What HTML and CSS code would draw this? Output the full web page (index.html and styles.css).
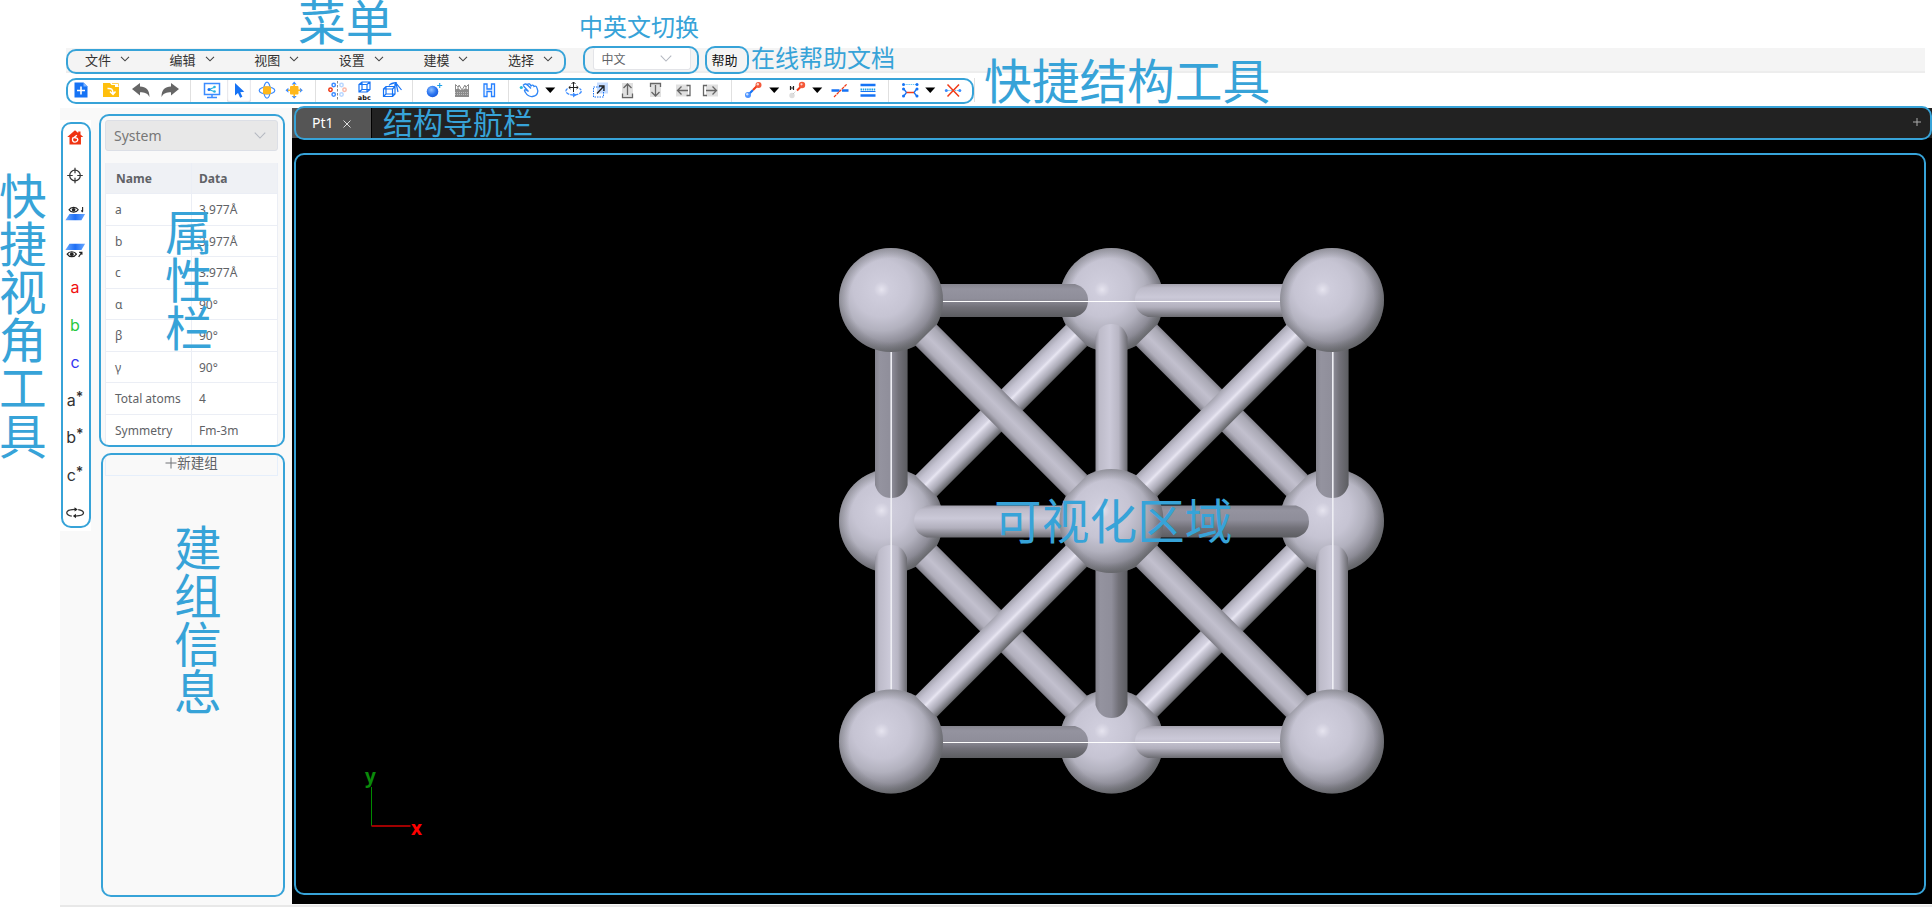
FILE: index.html
```html
<!DOCTYPE html>
<html lang="zh-CN">
<head>
<meta charset="utf-8">
<title>Pt1</title>
<link rel="stylesheet" href="styles.css">
</head>
<body>
<div class="app">
  <header class="menubar">
    <nav class="menus">
      <span class="menu">文件<svg class="chev" viewBox="0 0 10 6"><path d="M1 .8l4 4 4-4"/></svg></span>
      <span class="menu">编辑<svg class="chev" viewBox="0 0 10 6"><path d="M1 .8l4 4 4-4"/></svg></span>
      <span class="menu">视图<svg class="chev" viewBox="0 0 10 6"><path d="M1 .8l4 4 4-4"/></svg></span>
      <span class="menu">设置<svg class="chev" viewBox="0 0 10 6"><path d="M1 .8l4 4 4-4"/></svg></span>
      <span class="menu">建模<svg class="chev" viewBox="0 0 10 6"><path d="M1 .8l4 4 4-4"/></svg></span>
      <span class="menu">选择<svg class="chev" viewBox="0 0 10 6"><path d="M1 .8l4 4 4-4"/></svg></span>
    </nav>
    <div class="lang">中文<svg class="chev pale" viewBox="0 0 10 6"><path d="M.5.500l4.500 4.700L9.500.500"/></svg></div>
    <span class="help">帮助</span>
  </header>

  <div class="toolbar">
    <div class="group g1">
      <svg class="ic" viewBox="0 0 24 24"><path fill="#1673f5" d="M5.500 4.500h9l4 4v11h-13z"/><path fill="#7db4ff" d="M14.500 4.500v4h4z"/><path stroke="#fff" stroke-width="1.600" d="M12 8.500v8M8 12.500h8"/></svg>
      <svg class="ic" viewBox="0 0 24 24"><path fill="#ffbf0d" d="M4 5h7l1.500 2H16v2h4v10H4z"/><path fill="none" stroke="#ffd35a" d="M13 5.500h6.500v3"/><path fill="none" stroke="#fff" stroke-width="1.500" d="M8.500 10.500c4-.5 5.500 1 5.500 5M11 13.500l3 3 2.500-3"/></svg>
      <svg class="ic" viewBox="0 0 24 24"><path fill="#666" d="M3 11l8-6v3.600c6 0 9.500 3.500 9.500 10.400-2-4-5-4.800-9.500-4.800V17.500z"/></svg>
      <svg class="ic" viewBox="0 0 24 24"><path fill="#666" d="M20 11l-8-6v3.600C6 8.600 2.500 12 2.500 19c2-4 5-4.800 9.500-4.800v3.300z"/></svg>
    </div>
    <div class="group g2">
      <svg class="ic" viewBox="0 0 24 24"><path fill="none" stroke="#3c8cff" stroke-width="1.500" d="M4.500 5.500h15v11h-15zM12 16.500v3M7 19.500h10"/><path stroke="#26b3e0" fill="#26b3e0" stroke-width="1.200" d="M9 11.500l5-2M9 11.500l5 2"/><circle cx="9" cy="11.400" r="1.500" fill="#1673f5"/><circle cx="14.500" cy="9" r="1.300" fill="#26b3e0"/><circle cx="14.500" cy="13.500" r="1.300" fill="#26b3e0"/></svg>
      <svg class="ic picked" viewBox="0 0 24 24"><path fill="#1673f5" d="M8 5v12.500l3-2.600 2.100 4.800 2.300-1-2.100-4.500 4-.4z"/></svg>
      <svg class="ic" viewBox="0 0 24 24"><ellipse cx="12" cy="12.500" rx="7.800" ry="3.500" fill="none" stroke="#3c8cff" stroke-width="1.200"/><ellipse cx="12" cy="12.200" rx="3.300" ry="8" fill="none" stroke="#3c8cff" stroke-width="1.200"/><rect x="8" y="8.300" width="8" height="8" rx="1.500" fill="#ffb81c"/></svg>
      <svg class="ic" viewBox="0 0 24 24"><rect x="8" y="8" width="8.500" height="8.500" rx="1" fill="#ffb81c"/><path fill="#3c8cff" d="M12.200 3.500l2.500 2.900H9.700zM12.200 20.800l2.500-2.900H9.700zM3.500 12.200l2.900-2.500v5zM20.800 12.200l-2.900-2.500v5z"/><path stroke="#ffb81c" stroke-width="1.600" d="M12.200 6v12.500M6 12.200h12.500"/></svg>
    </div>
    <div class="group g3">
      <svg class="ic" viewBox="0 0 24 24"><path stroke="#888" stroke-dasharray="2.500 1.500" d="M12.500 3v19"/><g fill="none" stroke-width="1.500"><circle cx="8.700" cy="7" r="1.700" stroke="#3c8cff"/><circle cx="5.500" cy="11.800" r="1.700" stroke="#f03a17"/><circle cx="8.700" cy="16.500" r="1.700" stroke="#3c8cff"/><circle cx="16.500" cy="7" r="1.700" stroke="#b8d6ff"/><circle cx="19.500" cy="11.800" r="1.700" stroke="#f9b9aa"/><circle cx="16.500" cy="16.500" r="1.700" stroke="#b8d6ff"/></g></svg>
      <svg class="ic" viewBox="0 0 24 24"><path fill="none" stroke="#1673f5" stroke-width="1.200" d="M7 6.500h8v7.500H7zM7 6.500l3-2.500h8v7.500l-3 2.500M15 6.500l3-2.500M10 4v7.500h8M10 11.500L7 14"/><text x="12.300" y="21.500" class="abc">abc</text></svg>
      <svg class="ic" viewBox="0 0 24 24"><path fill="none" stroke="#1673f5" stroke-width="1.200" d="M3.500 11h9v7.500h-9zM3.500 11L6 8.500h9v7.500l-2.500 2.500M12.500 11L15 8.500M6 8.500V16h9M6 16l-2.500 2.500M9 7.500C11 5 13 4.500 16 4.500l-1.500 3M16 4.500l-6 2M16 5l5.500 7M16 5l2 9M16 5l-1.500 5"/></svg>
    </div>
    <div class="group g4">
      <svg class="ic" viewBox="0 0 24 24"><defs><radialGradient id="ball" cx=".4" cy=".35" r=".7"><stop offset="0" stop-color="#8fc0ff"/><stop offset=".6" stop-color="#2a74f0"/><stop offset="1" stop-color="#1858d8"/></radialGradient></defs><circle cx="10.500" cy="13.500" r="5.800" fill="url(#ball)"/><path stroke="#1ba0e8" stroke-width="1.100" d="M17.700 5v5M15.200 7.500h5"/></svg>
      <svg class="ic" viewBox="0 0 24 24"><path fill="none" stroke="#8b8b8b" d="M5.500 12V6.500l2 2h1.500V7l3 5 3-5v1.500h1.500l2-2V12M8 8v4M16 8v4M5 12.500h14"/><path fill="#8b8b8b" d="M5 11.500l3.500-1 3 2 3.500-2 4 1V19H5z"/><path stroke="#bbb" stroke-dasharray="1 1" d="M5 14.500h14M5 16.500h14"/></svg>
      <svg class="ic" viewBox="0 0 24 24"><path fill="#eef5ff" stroke="#2680ff" stroke-width="1.300" d="M7 6h3v5h4.500V6h3v12.500h-3v-5H10v5H7z"/></svg>
    </div>
    <div class="group g5">
      <svg class="ic" viewBox="0 0 24 24"><circle cx="4.300" cy="9.500" r="1.600" fill="#25b9d8"/><path fill="none" stroke="#2f86f6" stroke-width="1.300" d="M6 7.500c2-2.500 3.500-1.500 5 0l3 3M10 6.500c2-1.500 3-.5 4 1.500 1-1.500 2.500-1 3 .5 1.500-1 2.500 0 3 1.500 1.500 3 1 8-4.500 8.500-4 .5-5.500-1.500-7-4C7 12.500 7 11.500 9 12l2.500 1.500L6.500 8"/></svg>
      <svg class="caret" viewBox="0 0 12 12"><path d="M1 3.500h10L6 9z"/></svg>
      <svg class="ic" viewBox="0 0 24 24"><path fill="none" stroke="#222" d="M12.500 4v10M8 9.500h9M10.500 6l2-2 2 2M9.500 8L7.800 9.500l1.700 1.500M15.500 8l1.700 1.500-1.700 1.500"/><path fill="none" stroke="#3c8cff" stroke-width="1.300" stroke-dasharray="3.500 1" d="M6.500 10.500c-4 3 0 6.500 6 6.500s10.500-3.500 6-6.500"/><path fill="#3c8cff" d="M12 14.500v5l3.500-2.500z"/></svg>
      <svg class="ic" viewBox="0 0 24 24"><path fill="#c5dcff" d="M9 4.500h11v11H9z"/><path fill="none" stroke="#1673f5" stroke-dasharray="1.500 1" d="M5.500 9h10v10h-10z"/><path fill="none" stroke="#222" stroke-width="1.300" d="M9 15.500l7-7.500M11 8h5v5"/></svg>
      <svg class="ic" viewBox="0 0 24 24"><path fill="#e0e0e0" d="M6 5h11v13H6z"/><path fill="none" stroke="#666" stroke-width="1.300" d="M11.500 17V6M7.500 10l4-4 4 4M6.500 15.500v4h10v-4"/></svg>
      <svg class="ic" viewBox="0 0 24 24"><path fill="#e0e0e0" d="M7 6h11v13H7z"/><path fill="none" stroke="#666" stroke-width="1.300" d="M12.500 7v11M8.500 14l4 4 4-4M7.500 9V5.500h10V9"/></svg>
      <svg class="ic" viewBox="0 0 24 24"><path fill="#e0e0e0" d="M5 6.500h12v12H5z"/><path fill="none" stroke="#666" stroke-width="1.300" d="M17 12.500H7M10.500 8.500l-4 4 4 4M15.500 7.500h3.500v10h-3.500"/></svg>
      <svg class="ic" viewBox="0 0 24 24"><path fill="#e0e0e0" d="M8 6.500h12v12H8z"/><path fill="none" stroke="#666" stroke-width="1.300" d="M8 12.500h10M14.500 8.500l4 4-4 4M9 7.500H5.500v10H9"/></svg>
    </div>
    <div class="group g6">
      <svg class="ic" viewBox="0 0 24 24"><path stroke="#1673f5" stroke-width="2.200" d="M7 17l5-5"/><path stroke="#f03a17" stroke-width="2.200" d="M12 12l5-5"/><circle cx="7" cy="17" r="3" fill="#4c93ff"/><circle cx="6.200" cy="16.200" r="1.200" fill="#cfe2ff"/><circle cx="17.500" cy="7" r="3" fill="#f4593a"/><circle cx="16.800" cy="6.300" r="1.200" fill="#ffd5cb"/></svg>
      <svg class="caret" viewBox="0 0 12 12"><path d="M1 3.500h10L6 9z"/></svg>
      <svg class="ic" viewBox="0 0 24 24"><path stroke="#222" stroke-width="1.200" d="M5.500 8v4M8.500 8v4M5.500 10h3"/><path stroke="#f03a17" stroke-width="2" d="M12 12.500l4-4"/><circle cx="7" cy="17.500" r="2.700" fill="#ddd"/><path stroke="#bbb" stroke-dasharray="1 1" d="M8 16l3-3"/><circle cx="17" cy="7" r="3.200" fill="#f4593a"/><circle cx="16.500" cy="6.300" r="1.100" fill="#ffd5cb"/></svg>
      <svg class="caret" viewBox="0 0 12 12"><path d="M1 3.500h10L6 9z"/></svg>
      <svg class="ic" viewBox="0 0 24 24"><path stroke="#1673f5" stroke-width="2.300" d="M3.500 12.500h8M14 12.500h6.500"/><path stroke="#f03a17" stroke-width="1.300" stroke-dasharray="3 .7" d="M6 19L19 6"/></svg>
      <svg class="ic" viewBox="0 0 24 24"><path stroke="#1673f5" stroke-width="2.300" d="M4.500 7h15M4.500 17.500h15"/><path stroke="#1673f5" stroke-width="1" d="M4.500 13.500h15"/><path stroke="#1ba0e8" stroke-width="2" stroke-dasharray="1.500 .7" d="M4.500 11.500h15"/></svg>
    </div>
    <div class="group g7">
      <svg class="ic" viewBox="0 0 24 24"><path fill="none" stroke="#1673f5" stroke-width="1.300" d="M5.500 10.500L8.500 14.500 5.500 18.500M19 10.500l-3 4 3 4"/><path stroke="#f03a17" stroke-width="1.500" d="M8.500 14.500h7.500"/><path stroke="#6cc6f5" stroke-dasharray="1.500 .7" d="M6 6.500h13"/><g fill="#1673f5"><circle cx="5.500" cy="6.500" r="1.500"/><circle cx="19" cy="6.500" r="1.500"/><circle cx="5.500" cy="11" r="1.500"/><circle cx="19" cy="11" r="1.500"/><circle cx="5.500" cy="18" r="1.500"/><circle cx="19" cy="18" r="1.500"/></g></svg>
      <svg class="caret" viewBox="0 0 12 12"><path d="M1 3.500h10L6 9z"/></svg>
      <svg class="ic" viewBox="0 0 24 24"><path stroke="#6cc6f5" stroke-dasharray="1.500 .7" d="M5 12.500h14"/><circle cx="5.300" cy="12.500" r="1.500" fill="#3c8cff"/><circle cx="18.800" cy="12.500" r="1.500" fill="#3c8cff"/><path stroke="#f03a17" stroke-width="1.500" d="M6.500 6.500l11.500 12M18 6.500L6.500 18.500"/></svg>
    </div>
  </div>

  <main class="body">
    <aside class="views">
      <svg class="v" viewBox="0 0 24 24"><path fill="#ef3311" d="M12 4L3.500 11.500H6V19.500h12.500v-8H21l-3-2.700V5.500h-2.500V7z"/><path fill="none" stroke="#fff" stroke-width="1.500" d="M14 9.500l-3 2.500 3.500 1M10 12c-2 3 0 5 2 5s4-2 2.500-4"/></svg>
      <svg class="v" viewBox="0 0 24 24"><g fill="none" stroke="#333" stroke-width="1.300"><circle cx="12" cy="12" r="5.800"/><path d="M12 3.500v6M12 14.500v6M3.500 12h6M14.500 12h6"/></g></svg>
      <svg class="v" viewBox="0 0 24 24"><defs><linearGradient id="plane" x2="1"><stop offset="0" stop-color="#6aa8ff"/><stop offset=".5" stop-color="#1f6ff5"/><stop offset="1" stop-color="#6aa8ff"/></linearGradient></defs><path fill="url(#plane)" d="M6 13.500h17l-4 7H1.500z"/><path fill="#fff" stroke="#222" stroke-width="1.300" d="M5.500 9c2-3.500 8-3.500 10 0-2 3.500-8 3.500-10 0z"/><path fill="none" stroke="#222" stroke-width="1.200" d="M20.300 6v5M18.800 9.700l1.500 1.800"/><circle cx="10.500" cy="9" r="2" fill="#222"/></svg>
      <svg class="v" viewBox="0 0 24 24"><path fill="url(#plane)" d="M6 4.500h17l-4 7H1.500z"/><path fill="#fff" stroke="#222" stroke-width="1.300" d="M3.500 16c2-3.500 8-3.500 10 0-2 3.500-8 3.500-10 0z"/><path fill="none" stroke="#222" stroke-width="1.300" d="M16 19l3-4.500M16.500 14h3v2.500"/><circle cx="8.500" cy="16" r="2" fill="#222"/></svg>
      <span class="v red">a</span><span class="v green">b</span><span class="v blue">c</span>
      <span class="v">a<b>*</b></span><span class="v">b<b>*</b></span><span class="v">c<b>*</b></span>
      <svg class="v" viewBox="0 0 24 24"><path fill="none" stroke="#333" stroke-width="1.400" d="M8.500 16C2 15 1 10.500 7 9.200c2-.6 4-.7 6-.6M15.500 8.800c7 1 8 5.500 1 6.700-2 .4-3 .5-5 .4"/><path fill="#222" d="M11.500 6.300l3.500 2.300-3.500 2.300zM13 13.300v5l-3.300-2.500z"/></svg>
    </aside>

    <aside class="panel">
      <div class="system">System<svg class="chev pale" viewBox="0 0 10 6"><path d="M.5.500l4.500 4.700L9.500.500"/></svg></div>
      <div class="props">
        <div class="row head"><span>Name</span><span>Data</span></div>
        <div class="row"><span>a</span><span>3.977Å</span></div>
        <div class="row"><span>b</span><span>3.977Å</span></div>
        <div class="row"><span>c</span><span>3.977Å</span></div>
        <div class="row"><span>α</span><span>90°</span></div>
        <div class="row"><span>β</span><span>90°</span></div>
        <div class="row"><span>γ</span><span>90°</span></div>
        <div class="row"><span>Total atoms</span><span>4</span></div>
        <div class="row"><span>Symmetry</span><span>Fm-3m</span></div>
      </div>
      <div class="newgroup"><svg viewBox="0 0 12 12"><path d="M6 .5v11M.5 6h11"/></svg><span>新建组</span></div>
    </aside>

    <section class="stage">
      <div class="tabs">
        <div class="tab">Pt1<svg viewBox="0 0 8 8"><path d="M.5.500l7 7M7.500.500l-7 7"/></svg></div>
        <svg class="plus" viewBox="0 0 8 8"><path d="M4 0v8M0 4h8"/></svg>
      </div>
      <svg class="scene" viewBox="292 138 1640 766">
        <defs>
          <radialGradient id="atom" cx=".41" cy=".38" r=".68" fx=".41" fy=".4">
            <stop offset="0" stop-color="#e6e4ef"/><stop offset=".05" stop-color="#dbd9e6"/><stop offset=".11" stop-color="#cfcddc"/><stop offset=".4" stop-color="#c6c4d3"/><stop offset=".6" stop-color="#b2b1be"/><stop offset=".78" stop-color="#8f8e99"/><stop offset=".92" stop-color="#6b6c71"/><stop offset="1" stop-color="#606165"/>
          </radialGradient>
          <radialGradient id="rim"><stop offset=".8" stop-color="#606165" stop-opacity="0"/><stop offset="1" stop-color="#606165" stop-opacity=".42"/></radialGradient>
          <linearGradient id="hl" x2="0" y2="1"><stop offset="0" stop-color="#a3a1ad"/><stop offset=".12" stop-color="#bdbbc9"/><stop offset=".4" stop-color="#cbc9d8"/><stop offset=".7" stop-color="#b2b0bd"/><stop offset="1" stop-color="#6c6c72"/></linearGradient>
          <linearGradient id="hd" x2="0" y2="1"><stop offset="0" stop-color="#85848e"/><stop offset=".15" stop-color="#94939f"/><stop offset=".45" stop-color="#8f8e9a"/><stop offset=".7" stop-color="#727179"/><stop offset="1" stop-color="#5c5d61"/></linearGradient>
          <linearGradient id="vl"><stop offset="0" stop-color="#94939e"/><stop offset=".12" stop-color="#bdbbc9"/><stop offset=".45" stop-color="#cbc9d8"/><stop offset=".72" stop-color="#b8b6c4"/><stop offset="1" stop-color="#6c6c72"/></linearGradient>
          <linearGradient id="vd"><stop offset="0" stop-color="#85848e"/><stop offset=".15" stop-color="#94939f"/><stop offset=".5" stop-color="#8f8e9a"/><stop offset=".72" stop-color="#727179"/><stop offset="1" stop-color="#5c5d61"/></linearGradient>
          <linearGradient id="matte" x2="0" y2="1"><stop offset="0" stop-color="#85848e"/><stop offset=".15" stop-color="#a9a8b4"/><stop offset=".5" stop-color="#c2c0ce"/><stop offset=".8" stop-color="#b0aebb"/><stop offset="1" stop-color="#7c7b84"/></linearGradient>
          <linearGradient id="shine" x2="0" y2="1"><stop offset="0" stop-color="#a5a4b0"/><stop offset=".2" stop-color="#c4c2d1"/><stop offset=".38" stop-color="#d3d1e0"/><stop offset=".46" stop-color="#e8e6f2"/><stop offset=".54" stop-color="#d0cedc"/><stop offset=".75" stop-color="#aaa9b5"/><stop offset="1" stop-color="#606165"/></linearGradient>
          <g id="ball3"><circle r="52" fill="url(#atom)"/><circle r="52" fill="url(#rim)"/></g>
          <rect id="dm" x="49.500" y="-15" width="213" height="30" fill="url(#matte)"/>
          <rect id="ds" x="49.500" y="-15" width="213" height="30" fill="url(#shine)"/>
        </defs>
        <use href="#ball3" x="1111.500" y="300"/><use href="#ball3" x="891" y="521"/><use href="#ball3" x="1332" y="521"/><use href="#ball3" x="1111.500" y="741.500"/>
        <use href="#ds" transform="translate(891 521) rotate(-45)"/>
        <use href="#dm" transform="translate(1111.500 300) rotate(45)"/>
        <use href="#dm" transform="translate(891 521) rotate(45)"/>
        <use href="#ds" transform="translate(1111.500 741.500) rotate(-45)"/>
        <path fill="url(#hd)" d="M891 284h184q13 4 13 16.500t-13 16.500H891z"/>
        <path fill="url(#hl)" d="M1332 284h-184q-13 4-13 16.500t13 16.500h184z"/>
        <path fill="url(#hd)" d="M891 726h184q13 4 13 16t-13 16H891z"/>
        <path fill="url(#hl)" d="M1332 726h-184q-13 4-13 16t13 16h184z"/>
        <path fill="url(#hl)" d="M1111 505.500H927q-13 4-13 16t13 16h184z"/>
        <path fill="url(#hd)" d="M1111 505.500h185q13 4 13 16t-13 16h-185z"/>
        <path fill="url(#vd)" d="M875 300v185q4 13 16.300 13t16.300-13V300z"/>
        <path fill="url(#vd)" d="M1316 300v185q4 13 16.300 13t16.300-13V300z"/>
        <path fill="url(#vl)" d="M875 742V558q4-13 16-13t16 13v184z"/>
        <path fill="url(#vl)" d="M1316 742V558q4-13 16-13t16 13v184z"/>
        <path fill="url(#vl)" d="M1095.500 521V337q4-13 16-13t16 13v184z"/>
        <path fill="url(#vd)" d="M1095.500 521v184q4 13 16 13t16-13V521z"/>
        <path stroke="#fff" stroke-width="1.200" d="M891 301.500h441M891 742.500h441"/>
        <path stroke="#eeeef4" stroke-width="1.600" d="M891.200 300v442M1332.800 300v442"/>
        <use href="#ball3" x="891" y="300"/><use href="#ball3" x="1332" y="300"/><use href="#ball3" x="1111.500" y="521"/><use href="#ball3" x="891" y="741.500"/><use href="#ball3" x="1332" y="741.500"/>
        <use href="#dm" transform="translate(891 300) rotate(45)"/>
        <use href="#ds" transform="translate(1111.500 521) rotate(-45)"/>
        <use href="#ds" transform="translate(891 741.500) rotate(-45)"/>
        <use href="#dm" transform="translate(1111.500 521) rotate(45)"/>
        <path stroke="#008a00" d="M371.500 787v39"/><path stroke="#a00000" stroke-width="2" d="M371.500 826h39"/>
        <text x="365" y="782.500" class="axis" fill="#0a8a0a">y</text><text x="411" y="835" class="axis" fill="#f00">x</text>
      </svg>
    </section>
  </main>
</div>

<div class="notes">
  <i class="frame f-menu"></i><i class="frame f-lang"></i><i class="frame f-help"></i><i class="frame f-tools"></i><i class="frame f-views"></i>
  <i class="frame f-props"></i><i class="frame f-group"></i><i class="frame f-tabs"></i><i class="frame f-scene"></i>
  <span class="note n-menu">菜单</span>
  <span class="note small n-lang">中英文切换</span>
  <span class="note small n-help">在线帮助文档</span>
  <span class="note n-tools">快捷结构工具</span>
  <span class="note mid n-tabs">结构导航栏</span>
  <span class="note tall n-views">快捷视角工具</span>
  <span class="note tall n-props">属性栏</span>
  <span class="note tall n-group">建组信息</span>
  <span class="note n-scene">可视化区域</span>
</div>
</body>
</html>
```
FILE: styles.css
```css
* { box-sizing: border-box; }
body {
  margin: 0;
  width: 1932px;
  height: 908px;
  overflow: hidden;
  position: relative;
  background: #fff;
  color: #333;
  font-family: "Noto Sans", "Noto Sans CJK SC", sans-serif;
}
svg { display: block; flex: none; }
.app { padding: 48px 0 0 60px; height: 908px; display: flex; flex-direction: column; }

.menubar {
  display: flex;
  align-items: flex-start;
  height: 25px;
  margin: 0 7px 0 6px;
  padding-left: 19px;
  background: #f4f4f4;
  border-bottom: 2px solid #ededed;
  font: 13px/24px "Noto Sans CJK SC", sans-serif;
}
.menus { display: flex; }
.menu { width: 84.600px; display: flex; align-items: center; gap: 9px; }
.chev { width: 10px; height: 6px; fill: none; stroke: #444; stroke-width: 1.100; margin-top: -2px; }
.chev.pale { stroke: #b4b8c0; stroke-width: .9; width: 12px; height: 7px; margin-top: 0; }
.lang {
  width: 98px;
  height: 22px;
  padding: 0 18px 0 8px;
  border: 1px solid #e3e4e8;
  border-top: 0;
  border-radius: 3px;
  background: #fff;
  display: flex;
  align-items: center;
  justify-content: space-between;
  font-size: 12px;
  line-height: 22px;
  color: #606266;
}
.help { margin-left: 21px; color: #111; }

.toolbar { display: flex; align-items: center; height: 34px; margin-bottom: 1px; padding-left: 6px; }
.group { display: flex; align-items: center; gap: 3.500px; height: 24px; border-right: 1px solid #e0e0e0; }
.g1 { width: 125px; padding-left: 2.500px; gap: 6px; }
.g2 { width: 125px; padding-left: 8.500px; }
.g3 { width: 97px; padding-left: 8.500px; }
.g4 { width: 96px; padding-left: 9px; }
.g5 { width: 223px; padding-left: 8px; }
.g6 { width: 157px; padding-left: 9px; }
.g7 { width: 86px; padding-left: 8.500px; }
.ic { width: 24px; height: 24px; }
.picked { box-shadow: inset 0 0 2px #aab; border-radius: 2px; }
.caret { width: 12.500px; height: 12px; fill: #000; margin: 0 1px 0 -1px; }
.abc { font: bold 6.500px "DejaVu Sans", sans-serif; text-anchor: middle; fill: #111; }

.body { display: flex; height: 799px; border-bottom: 2px solid #e8e8e8; background: #f9f9f9; }
.views {
  width: 31px;
  height: 411px;
  margin-top: 12px;
  background: #fff;
  display: flex;
  flex-direction: column;
  align-items: flex-start;
}
.v {
  width: 30px;
  height: 37.500px;
  flex: none;
  display: flex;
  align-items: center;
  justify-content: center;
  font: 16px/35px Inter, sans-serif;
  color: #333;
}
span.v { padding-bottom: 2px; }
svg.v { display: block; padding: 5px 4px 7.500px; }
.v b { font-size: 14px; font-weight: 600; line-height: 27px; align-self: flex-start; }
.red { color: #f01010; }
.green { color: #27c93f; }
.blue { color: #3434f0; }

.panel { width: 201px; padding: 12px 14px 0; display: flex; flex-direction: column; }
.system {
  height: 31px;
  padding: 0 11px 1px 8px;
  background: #e8e8e8;
  border: 1px solid #dcdfe6;
  border-radius: 3px;
  display: flex;
  align-items: center;
  justify-content: space-between;
  font-size: 14px;
  color: #777;
}
.props { margin-top: 12px; height: 283px; border: solid #ebeef5; border-width: 0 1px; background: #fff; font-size: 12px; color: #606266; }
.row { display: grid; grid-template-columns: 85px 1fr; height: 31.450px; line-height: 31.500px; border-bottom: 1px solid #ebeef5; }
.row span { padding-left: 9px; white-space: nowrap; }
.row span + span { padding-left: 7px; border-left: 1px solid #ebeef5; }
.head { background: #eff1f5; font-weight: bold; }
.head span:first-child { padding-left: 10px; }
.row:last-child { border-bottom: 0; }
.newgroup {
  margin-top: 8px;
  height: 22px;
  padding-bottom: 5px;
  border: 1px solid #e6effb;
  display: flex;
  justify-content: center;
  align-items: center;
  font: 13.500px/15px "Noto Sans CJK SC", sans-serif;
  color: #606266;
}
.newgroup svg { width: 12px; height: 12px; stroke: #707276; }

.stage { flex: 1; background: #000; display: flex; flex-direction: column; height: 796px; }
.tabs { height: 30px; background: #222; display: flex; align-items: center; justify-content: space-between; padding-right: 11px; }
.tab {
  width: 80px;
  height: 30px;
  background: #555;
  border-right: 1px solid #000;
  padding: 0 0 1px 20px;
  display: flex;
  align-items: center;
  gap: 9.500px;
  font-size: 14px;
  color: #fff;
}
.tab svg { width: 8px; height: 8px; stroke: #ddd; margin-top: 3px; }
.plus { width: 8px; height: 8px; stroke: #aaa; margin-top: -2px; }
.scene { width: 1640px; height: 766px; }
.axis { font: bold 19px "Open Sans", sans-serif; }

/* callouts laid over the interface */
.notes { position: absolute; inset: 0; }
.frame { position: absolute; border: 2px solid #37a3d8; border-radius: 10px; }
.f-menu { left: 66px; top: 49px; width: 500px; height: 25px; }
.f-lang { left: 583px; top: 46px; width: 116px; height: 28px; }
.f-help { left: 705px; top: 46px; width: 44px; height: 28px; }
.f-tools { left: 66px; top: 78px; width: 908px; height: 26px; }
.f-views { left: 61px; top: 122px; width: 30px; height: 406px; }
.f-props { left: 99px; top: 114px; width: 186px; height: 333px; }
.f-group { left: 101px; top: 453px; width: 184px; height: 444px; }
.f-tabs { left: 294px; top: 106px; width: 1638px; height: 34px; }
.f-scene { left: 294px; top: 153px; width: 1632px; height: 742px; }
.note { position: absolute; font: 47.700px/48px "Noto Sans CJK SC", sans-serif; color: #37a3d8; white-space: nowrap; }
.small { font-size: 24px; line-height: 24px; }
.mid { font-size: 30px; line-height: 30px; }
.tall { width: 48px; white-space: normal; line-height: 48px; }
.n-menu { left: 298px; top: 0; line-height: 39px; }
.n-lang { left: 579px; top: 14px; }
.n-help { left: 751px; top: 45px; }
.n-tools { left: 984px; top: 55px; }
.n-tabs { left: 383px; top: 106px; }
.n-views { left: -1px; top: 170px; }
.n-props { left: 165px; top: 206px; }
.n-group { left: 174px; top: 522px; }
.n-scene { left: 994px; top: 495px; }
```
